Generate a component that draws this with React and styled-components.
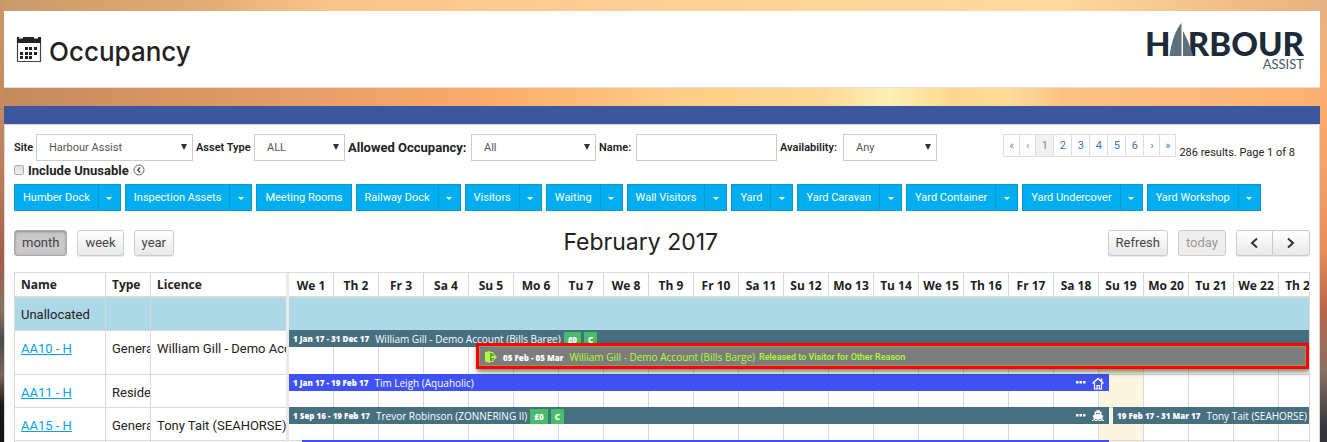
import React from "react";
import styled, { createGlobalStyle, css } from "styled-components";

const DAY = 45;
const LINE = "#d9d9d9";

const GlobalStyle = createGlobalStyle`
  *, *::before, *::after { box-sizing: border-box; }
  html { scrollbar-width: none; }
  body {
    margin: 0;
    min-height: 100vh;
    font-family: Roboto, "Open Sans", sans-serif;
    font-size: 13px;
    color: #222;
    background:
      linear-gradient(180deg, #c6986a 0, #c48c60 100px, #b9785a 190px, #a05c48 260px, #8a7460 310px, #4c4a4c 340px, #7a6656 375px, #1c191b 405px, #131112 100%) left top / 4px 100% no-repeat,
      linear-gradient(180deg, #e5b283 0, #fbb072 90px, #f0a066 180px, #e88e58 250px, #b8664a 310px, #8a7064 370px, #5c5250 400px, #34323a 430px) right top / 7px 100% no-repeat,
      linear-gradient(90deg, #c99a6b 0, #e0ac74 15%, #fcc48c 25%, #ffd598 60%, #ffd9a0 80%, #f0bd88 93%, #e5b283 100%) left top / 100% 11px no-repeat,
      linear-gradient(90deg, #c58a5c 0, #e29c66 20%, #fbac6c 37%, #fecf86 52%, #ffd995 62%, #fff0b6 67%, #ffd78c 72%, #ffdc98 76%, #fdc384 80%, #fbb072 100%);
  }
  button, input, select { font: inherit; color: inherit; }
`;

const Page = styled.div`
  padding: 11px 7px 0 4px;
`;

const Header = styled.header`
  display: flex;
  align-items: center;
  justify-content: space-between;
  height: 77px;
  padding: 0 16px 0 12px;
  background: #fff;
  border-bottom: 1px solid #ddd;
`;

const Title = styled.h1`
  display: flex;
  align-items: center;
  gap: 7px;
  margin: 0;
  font: 500 26px/32px Inter, sans-serif;
  color: #222;
`;

const TitleText = styled.span`
  padding-top: 5px;
`;

const Strip = styled.div`
  height: 18px;
  margin-top: 18px;
  background: #3b579d;
`;

const Panel = styled.main`
  padding: 9px 9px 0 9px;
  background: #fff;
  border: 1px solid #d9d9d9;
  border-bottom: 0;
`;

const Filters = styled.form`
  display: flex;
  align-items: center;
  height: 27px;
`;

const Field = styled.label`
  display: flex;
  align-items: center;
  justify-content: space-between;
  flex: none;
  width: ${(p) => p.$width}px;
  margin-right: 3px;
  font-size: ${(p) => (p.$large ? 13 : 11)}px;
  font-weight: ${(p) => (p.$large ? 700 : 600)};
  white-space: nowrap;
  color: #222;
`;

const control = css`
  height: 27px;
  width: ${(p) => p.$width}px;
  border: 1px solid #ccc;
  border-radius: 0;
  background: #fff;
  font-size: 11px;
  font-weight: 400;
  color: #555;
`;

const SelectWrap = styled.span`
  position: relative;
  display: flex;
  &::after {
    content: "";
    position: absolute;
    right: 6px;
    top: 10px;
    border: 3px solid transparent;
    border-top: 6px solid #333;
    border-bottom: 0;
  }
`;

const Select = styled.select`
  ${control}
  appearance: none;
  padding: 0 12px;
`;

const TextInput = styled.input`
  ${control}
`;

const Pager = styled.nav`
  display: flex;
  align-items: flex-start;
  margin-left: auto;
  padding-right: 15px;
  gap: 3px;
  font-size: 11px;
  line-height: 16px;
  white-space: nowrap;
`;

const Pages = styled.div`
  display: flex;
  border: 1px solid #ddd;
  border-right: 0;
`;

const PageLink = styled.a`
  width: ${(p) => (p.$arrow ? 16 : 18)}px;
  height: 21px;
  line-height: 22px;
  text-align: center;
  border-right: 1px solid #ddd;
  text-decoration: none;
  color: ${(p) => (p.$muted ? "#888" : "#337ab7")};
  background: ${(p) => (p.$active ? "#f1f1f1" : "#fff")};
`;

const Results = styled.span`
  padding-top: 11px;
`;

const Unusable = styled.div`
  display: flex;
  align-items: center;
  gap: 4px;
  height: 18px;
  label { font-size: 13px; font-weight: 700; }
`;

const Checkbox = styled.input`
  appearance: none;
  width: 10px;
  height: 10px;
  margin: 0;
  border: 1px solid #aaa;
  border-radius: 2px;
  background: linear-gradient(#ddd, #eee);
`;

const Groups = styled.div`
  display: flex;
  gap: 4px;
  margin-top: 5px;
`;

const Split = styled.div`
  display: flex;
  border: 1px solid #0c97d0;
  background: #00aeef;
  color: #fff;
`;

const GroupButton = styled.button`
  height: 25px;
  padding: 0 8px;
  border: 0;
  background: none;
  font-size: 11px;
  line-height: 25px;
  white-space: nowrap;
`;

const CaretButton = styled.button`
  display: flex;
  align-items: center;
  justify-content: center;
  width: 22px;
  height: 25px;
  padding: 2px 0 0;
  border: 0;
  border-left: 1px solid #0c97d0;
  background: none;
  &::after {
    content: "";
    border: 3px solid transparent;
    border-top-color: #fff;
    border-bottom: 0;
  }
`;

const Toolbar = styled.div`
  display: flex;
  justify-content: space-between;
  align-items: center;
  height: 27px;
  margin-top: 18px;
`;

const Cluster = styled.div`
  display: flex;
  gap: ${(p) => (p.$joined ? 0 : 10)}px;
`;

const ToolButton = styled.button`
  display: flex;
  align-items: center;
  justify-content: center;
  height: 26px;
  padding: 0 7px;
  border: 1px solid #ccc;
  border-radius: 3px;
  background: linear-gradient(#fff, #e8e8e8);
  box-shadow: 0 1px 1px rgba(0, 0, 0, 0.1);
  color: #444;
  line-height: 24px;
  ${(p) => p.$active && css`
    background: #c9c9c9;
    border-color: #aaa;
    box-shadow: inset 0 1px 3px rgba(0, 0, 0, 0.3);
  `}
  &:disabled { background: #eee; color: #999; box-shadow: none; }
  ${Cluster} > ${Cluster} & { width: 37px; }
  ${Cluster} > ${Cluster} &:first-child { border-radius: 3px 0 0 3px; }
  ${Cluster} > ${Cluster} &:last-child { border-left-width: 0; border-radius: 0 3px 3px 0; }
`;

const Month = styled.h2`
  margin: 0;
  font: 400 23px/27px Inter, sans-serif;
  color: #222;
`;

const Calendar = styled.div`
  display: flex;
  margin-top: 16px;
  border: 1px solid ${LINE};
  border-bottom: 0;
`;

const AssetTable = styled.table`
  flex: none;
  width: 271px;
  table-layout: fixed;
  border-collapse: separate;
  border-spacing: 0;
  line-height: 18px;
`;

const Head = styled.th`
  width: ${(p) => p.$width}px;
  height: 25px;
  padding: 0 6px;
  border-left: ${(p) => (p.$first ? 0 : 1)}px solid ${LINE};
  border-bottom: 2px solid ${LINE};
  font-family: "Open Sans", sans-serif;
  font-size: 12px;
  font-weight: 700;
  text-align: left;
`;

const Cell = styled.td`
  height: ${(p) => p.$height}px;
  padding: ${(p) => (p.$head ? 8 : 9)}px 0 0 6px;
  border-left: ${(p) => (p.$first ? 0 : 1)}px solid ${LINE};
  border-top: ${(p) => (p.$head ? 0 : 1)}px solid ${LINE};
  background: ${(p) => (p.$head ? "lightblue" : "#fff")};
  vertical-align: top;
  white-space: nowrap;
  overflow: hidden;
  a { color: #00a4e4; }
`;

const Timeline = styled.div`
  flex: 1;
  min-width: 0;
  overflow: hidden;
  border-left: 3px solid #eaeaea;
`;

const Days = styled.div`
  display: flex;
  height: 25px;
  border-bottom: 2px solid ${LINE};
`;

const Day = styled.div`
  flex: none;
  width: ${DAY}px;
  border-right: 1px solid ${LINE};
  font-family: "Open Sans", sans-serif;
  font-size: 12px;
  font-weight: 700;
  line-height: 25px;
  text-align: center;
  white-space: nowrap;
`;

const Lane = styled.div`
  height: ${(p) => p.$height}px;
  background:
    linear-gradient(${LINE}, ${LINE}) 0 0 / 100% 1px no-repeat,
    repeating-linear-gradient(90deg, transparent 0 ${DAY - 1}px, ${LINE} ${DAY - 1}px ${DAY}px),
    linear-gradient(#fcf6e1, #fcf6e1) ${DAY * 18}px 0 / ${DAY}px 100% no-repeat;
  ${(p) => p.$head && css`background: lightblue;`}
`;

const EventLine = styled.div`
  display: flex;
  height: 17px;
`;

const Event = styled.div`
  display: flex;
  align-items: center;
  flex: none;
  width: ${(p) => p.$length}px;
  height: 17px;
  margin-left: ${(p) => p.$offset}px;
  padding: 1px 5px 0 4px;
  background: ${(p) => p.$color};
  color: #fff;
  font-family: "Open Sans", sans-serif;
  font-size: 10px;
  font-weight: 500;
  line-height: 16px;
  white-space: nowrap;
`;

const When = styled.b`
  margin-right: 6px;
  font-family: "Open Sans", sans-serif;
  font-size: 8px;
  font-weight: 800;
`;

const Tag = styled.span`
  height: 15px;
  margin-left: 3px;
  padding: 0 4px;
  background: #46be67;
  font-size: 8px;
  font-weight: 800;
  line-height: 15px;
`;

const EventIcons = styled.span`
  display: flex;
  align-items: center;
  gap: 6px;
  margin-left: auto;
`;

const Marked = styled.div`
  position: relative;
  display: flex;
  align-items: center;
  width: calc(100% - 187px);
  height: 26px;
  margin: -4px 0 0 187px;
  padding: 2px 6px 0;
  border: 3px solid #f00;
  background: #7c7c7c;
  box-shadow: inset 0 0 0 1px #8a9a68, 1px 3px 5px rgba(40, 50, 0, 0.6);
  color: #adff2f;
  font-family: "Open Sans", sans-serif;
  font-size: 10px;
  font-weight: 500;
  white-space: nowrap;
  ${When} { margin: 0 6px 0 6px; color: #fff; }
  small { margin-left: 4px; font-family: Roboto, sans-serif; font-size: 9px; font-weight: 500; }
`;

function CalendarIcon() {
  return (
    <svg width="26" height="27" viewBox="0 0 26 27" aria-hidden="true">
      <path d="M1.500 2V25.500H24.500V2" fill="none" stroke="#444" strokeWidth="1.200" />
      <path d="M1 1h2v1.500h4V1h11v1.500h4V1h3v6H1z" fill="#222" />
      <path d="M9 11h3v3H9zM13 11h3v3h-3zM18 11h3v3h-3zM4 16h3v3H4zM9 16h3v3H9zM13 16h3v3h-3zM18 16h3v3h-3zM4 20h3v3H4zM9 20h3v3H9zM13 20h3v3h-3z" fill="#222" />
    </svg>
  );
}

function Logo() {
  return (
    <svg width="160" height="54" viewBox="0 0 160 54" role="img" aria-label="Harbour Assist">
      <g fill="#1b2b38" fontFamily="Lato, sans-serif" fontWeight="900" fontSize="33">
        <text x="1" y="34">H</text>
        <text x="160" y="34" textAnchor="end">RBOUR</text>
      </g>
      <path d="M25.500 34C27 22 31 8 37.500 1V34Z" fill="#5e6f7d" />
      <path d="M39 9C43 16 47 26 49 34H39Z" fill="#5e6f7d" />
      <text x="160" y="47" textAnchor="end" fill="#4a5864" fontFamily="Lato, sans-serif" fontSize="13">ASSIST</text>
    </svg>
  );
}

const Chevron = ({ back }) => (
  <svg width="10" height="12" viewBox="0 0 10 12" fill="none" stroke="#333" strokeWidth="2" aria-hidden="true">
    <path d={back ? "M8 1.500L3 6l5 4.500" : "M2 1.500L7 6l-5 4.500"} />
  </svg>
);

const CollapseIcon = () => (
  <svg width="12" height="12" viewBox="0 0 12 12" fill="none" stroke="#444" aria-hidden="true">
    <circle cx="6" cy="6" r="5" strokeWidth="0.8" />
    <path d="M7.200 3.500L4.700 6l2.500 2.500" strokeWidth="1.300" />
  </svg>
);

const Dots = () => (
  <svg width="10" height="12" viewBox="0 0 10 12" fill="#fff" aria-hidden="true">
    <path d="M0 4h2.500v2.500H0zM3.500 4H6v2.500H3.500zM7 4h2.500v2.500H7z" />
  </svg>
);

const HouseIcon = () => (
  <svg width="12" height="13" viewBox="0 0 12 13" fill="none" stroke="#fff" aria-hidden="true">
    <path d="M0.500 6.500L6 1.500l5.500 5M9.500 1.500v3" strokeWidth="1.500" />
    <path d="M2.500 6v6h7V6M5 12V8.500h2.500V12" strokeWidth="1.200" />
  </svg>
);

const ShipIcon = () => (
  <svg width="12" height="12" viewBox="0 0 12 12" fill="#fff" aria-hidden="true">
    <path d="M4.500 0h3v1.500H9.500V5l2 .8L10 9H2L.5 5.800l2-.8V1.500h2zM4 3v1.400l2-.8 2 .8V3z" />
    <path d="M0 10.500c1 0 1-.8 2-.8s1 .8 2 .8 1-.8 2-.8 1 .8 2 .8 1-.8 2-.8 1 .8 2 .8" fill="none" stroke="#fff" strokeWidth="1.200" />
  </svg>
);

const ExitIcon = () => (
  <svg width="12" height="12" viewBox="0 0 12 12" fill="#adff2f" aria-hidden="true">
    <path d="M0 1l5-1v12L0 10.500z" />
    <path d="M5 1.500h3V4M8 8v2.500H5" fill="none" stroke="#adff2f" />
    <path d="M6 5h3V3l3 3-3 3V7H6z" />
  </svg>
);

const groups = [
  ["Humber Dock", true], ["Inspection Assets", true], ["Meeting Rooms", false], ["Railway Dock", true],
  ["Visitors", true], ["Waiting", true], ["Wall Visitors", true], ["Yard", true], ["Yard Caravan", true],
  ["Yard Container", true], ["Yard Undercover", true], ["Yard Workshop", true],
];

const assets = [
  { name: "AA10 - H", type: "General", licence: "William Gill - Demo Account", height: 44 },
  { name: "AA11 - H", type: "Residential", licence: "", height: 33 },
  { name: "AA15 - H", type: "General", licence: "Tony Tait (SEAHORSE)", height: 33 },
];

const weekdays = ["Tu", "We", "Th", "Fr", "Sa", "Su", "Mo"];
const days = Array.from({ length: 28 }, (_, i) => `${weekdays[(i + 1) % 7]} ${i + 1}`);

const TEAL = "#466f80";
const BLUE = "#4052f5";

function PickList({ label, value, width, total, large }) {
  return (
    <Field $width={total} $large={large}>
      {label}
      <SelectWrap>
        <Select $width={width} defaultValue={value}>
          <option>{value}</option>
        </Select>
      </SelectWrap>
    </Field>
  );
}

export default function App() {
  return (
    <>
      <GlobalStyle />
      <Page>
        <Header>
          <Title><CalendarIcon /><TitleText>Occupancy</TitleText></Title>
          <Logo />
        </Header>
        <Strip />
        <Panel>
          <Filters>
            <PickList label="Site" value="Harbour Assist" width={157} total={179} />
            <PickList label="Asset Type" value="ALL" width={91} total={149} />
            <PickList label="Allowed Occupancy:" value="All" width={125} total={248} large />
            <Field $width={178}>Name:<TextInput $width={141} type="text" /></Field>
            <PickList label="Availability:" value="Any" width={94} total={157} />
            <Pager aria-label="Pages">
              <Pages>
                <PageLink href="#" $arrow $muted>«</PageLink>
                <PageLink href="#" $arrow $muted>‹</PageLink>
                <PageLink href="#" $active $muted>1</PageLink>
                {[2, 3, 4, 5, 6].map((n) => <PageLink key={n} href="#">{n}</PageLink>)}
                <PageLink href="#" $arrow>›</PageLink>
                <PageLink href="#" $arrow>»</PageLink>
              </Pages>
              <Results>286 results. Page 1 of 8</Results>
            </Pager>
          </Filters>
          <Unusable>
            <Checkbox type="checkbox" id="unusable" />
            <label htmlFor="unusable">Include Unusable</label>
            <CollapseIcon />
          </Unusable>
          <Groups>
            {groups.map(([name, menu]) => (
              <Split key={name}>
                <GroupButton>{name}</GroupButton>
                {menu && <CaretButton aria-label={`${name} menu`} />}
              </Split>
            ))}
          </Groups>
          <Toolbar>
            <Cluster>
              <ToolButton $active>month</ToolButton>
              <ToolButton>week</ToolButton>
              <ToolButton>year</ToolButton>
            </Cluster>
            <Month>February 2017</Month>
            <Cluster>
              <ToolButton>Refresh</ToolButton>
              <ToolButton disabled>today</ToolButton>
              <Cluster $joined>
                <ToolButton aria-label="Previous"><Chevron back /></ToolButton>
                <ToolButton aria-label="Next"><Chevron /></ToolButton>
              </Cluster>
            </Cluster>
          </Toolbar>
          <Calendar>
            <AssetTable>
              <thead>
                <tr>
                  <Head $width={90} $first>Name</Head>
                  <Head $width={45}>Type</Head>
                  <Head $width={136}>Licence</Head>
                </tr>
              </thead>
              <tbody>
                <tr>
                  <Cell $head $first $height={32}>Unallocated</Cell>
                  <Cell $head />
                  <Cell $head />
                </tr>
                {assets.map((a) => (
                  <tr key={a.name}>
                    <Cell $first $height={a.height}><a href="#">{a.name}</a></Cell>
                    <Cell>{a.type}</Cell>
                    <Cell>{a.licence}</Cell>
                  </tr>
                ))}
                <tr>
                  <Cell $first $height={33} />
                  <Cell />
                  <Cell />
                </tr>
              </tbody>
            </AssetTable>
            <Timeline>
              <Days>{days.map((d) => <Day key={d}>{d}</Day>)}</Days>
              <Lane $head $height={32} />
              <Lane $height={44}>
                <EventLine>
                  <Event $offset={0} $length={DAY * 28} $color={TEAL}>
                    <When>1 Jan 17 - 31 Dec 17</When>William Gill - Demo Account (Bills Barge)
                    <Tag>£0</Tag><Tag>C</Tag>
                  </Event>
                </EventLine>
                <Marked>
                  <ExitIcon />
                  <When>05 Feb - 05 Mar</When>William Gill - Demo Account (Bills Barge)
                  <small>Released to Visitor for Other Reason</small>
                </Marked>
              </Lane>
              <Lane $height={33}>
                <EventLine>
                  <Event $offset={0} $length={820} $color={BLUE}>
                    <When>1 Jan 17 - 19 Feb 17</When>Tim Leigh (Aquaholic)
                    <EventIcons><Dots /><HouseIcon /></EventIcons>
                  </Event>
                </EventLine>
              </Lane>
              <Lane $height={33}>
                <EventLine>
                  <Event $offset={0} $length={820} $color={TEAL}>
                    <When>1 Sep 16 - 19 Feb 17</When>Trevor Robinson (ZONNERING II)
                    <Tag>£0</Tag><Tag>C</Tag>
                    <EventIcons><Dots /><ShipIcon /></EventIcons>
                  </Event>
                  <Event $offset={4} $length={436} $color={TEAL}>
                    <When>19 Feb 17 - 31 Mar 17</When>Tony Tait (SEAHORSE)
                  </Event>
                </EventLine>
              </Lane>
              <Lane $height={33}>
                <EventLine>
                  <Event $offset={13} $length={807} $color={BLUE} />
                </EventLine>
              </Lane>
            </Timeline>
          </Calendar>
        </Panel>
      </Page>
    </>
  );
}
